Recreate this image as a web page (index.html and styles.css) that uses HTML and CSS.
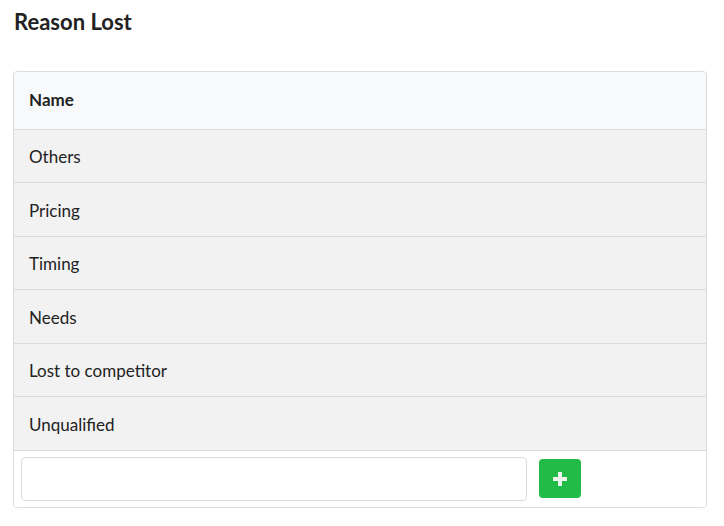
FILE: index.html
```html
<!DOCTYPE html>
<html>
<head>
<meta charset="utf-8">
<link rel="stylesheet" href="styles.css">
</head>
<body>
<div class="page">
  <h1 class="title">Reason Lost</h1>
  <div class="card">
    <div class="row head">Name</div>
    <div class="row">Others</div>
    <div class="row">Pricing</div>
    <div class="row">Timing</div>
    <div class="row">Needs</div>
    <div class="row">Lost to competitor</div>
    <div class="row">Unqualified</div>
    <div class="footer">
      <input class="field" type="text">
      <button class="add" type="button" aria-label="Add">
        <svg width="14" height="14" viewBox="0 0 14 14"><path d="M5 0h4v5h5v4H9v5H5V9H0V5h5z" fill="#eef3ee"/></svg>
      </button>
    </div>
  </div>
</div>
</body>
</html>
```
FILE: styles.css
```css
html, body { margin: 0; padding: 0; background: #fff; }
body { font-family: Lato, "Open Sans", sans-serif; color: #222; }
.page { padding: 7px 17px 0 13px; }
.title { margin: 0 0 34px 1px; font-size: 22px; font-weight: 700; line-height: 30px; color: #222; }
.card { border: 1px solid #dcdcdc; border-radius: 4px; overflow: hidden; }
.row { padding: 14.5px 15px 12px; font-size: 17px; line-height: 26px; background: #f2f2f2; border-bottom: 1px solid #dcdcdc; }
.row.head { background: #f8f9fa; font-weight: 700; padding: 14.5px 15px 16px; }
.footer { display: flex; align-items: center; gap: 12px; padding: 6px 7px 6px 7px; background: #fff; }
.field { width: 506px; height: 44px; box-sizing: border-box; border: 1px solid #dcdcdc; border-radius: 4px; margin: 0; padding: 6px 12px; font: inherit; }
.add { width: 42px; height: 39px; border: 0; border-radius: 4px; background: #22bb47; display: flex; align-items: center; justify-content: center; padding: 0; margin: 0; }
.add svg { display: block; }
```
